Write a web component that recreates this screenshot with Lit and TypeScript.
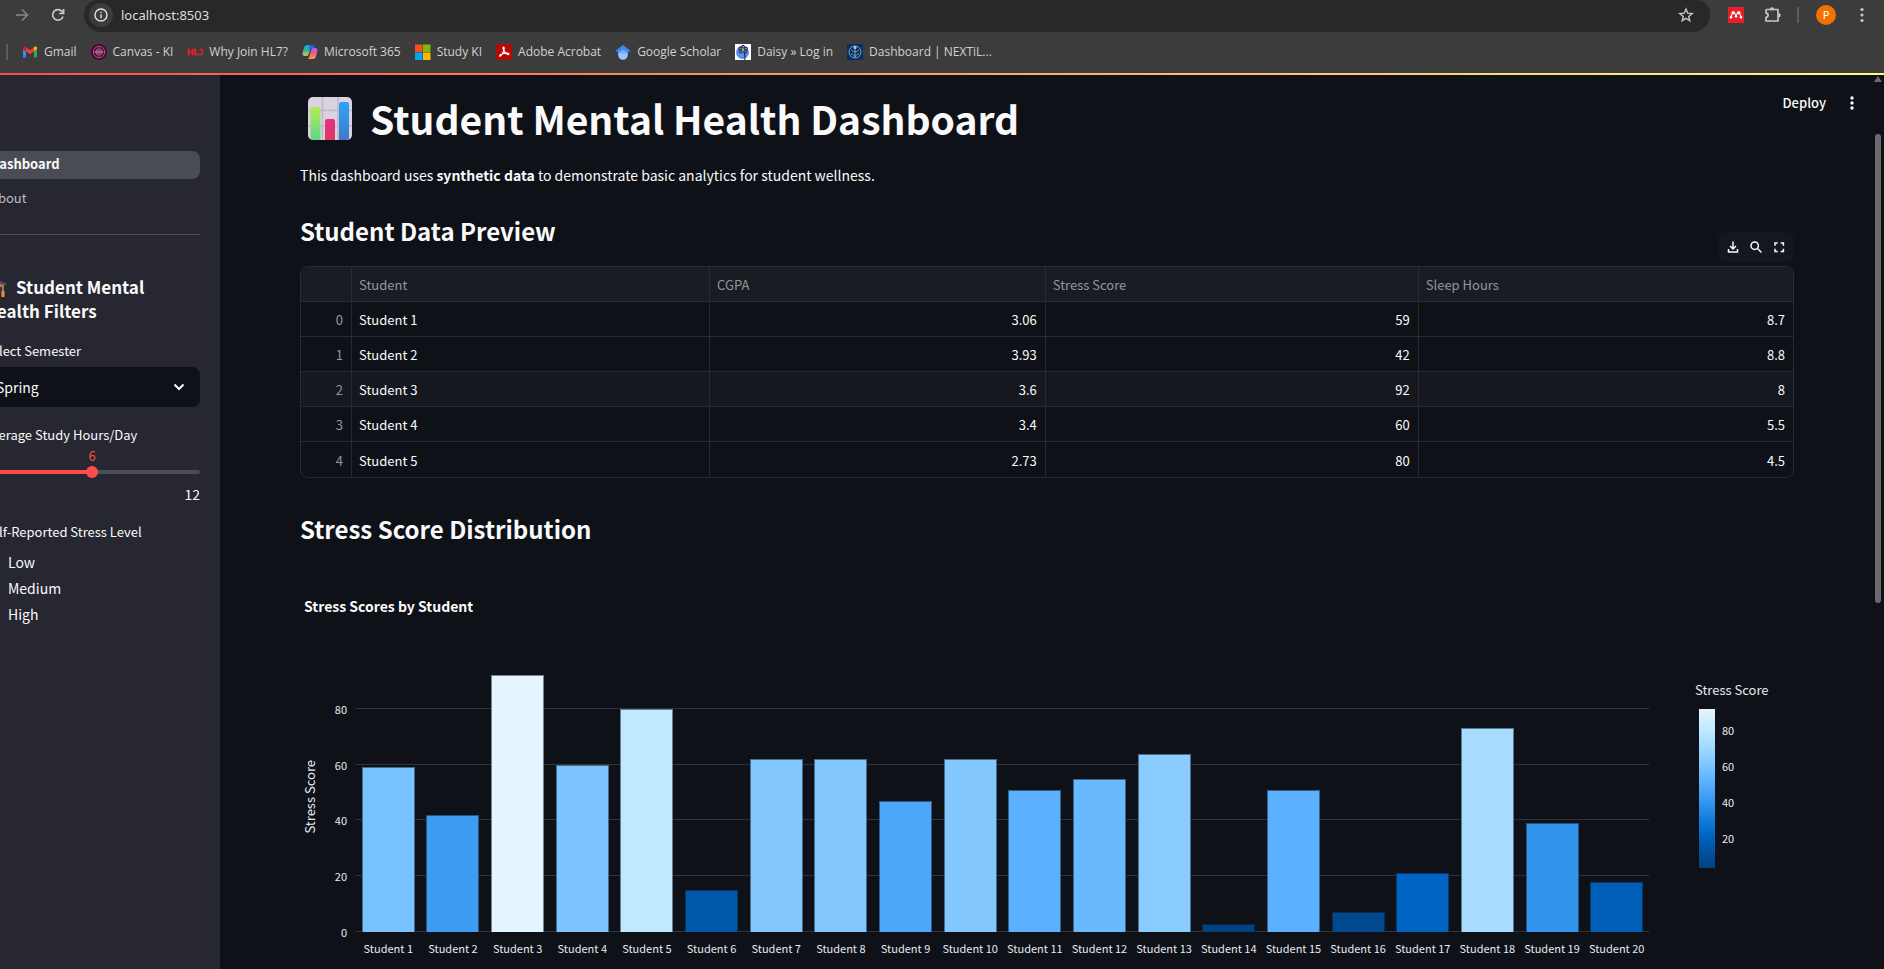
import { LitElement, html, svg, css, unsafeCSS } from "lit";
import { customElement, state } from "lit/decorators.js";
import { styleMap } from "lit/directives/style-map.js";
import { classMap } from "lit/directives/class-map.js";

const sans = css`"Source Sans Pro", "Noto Sans CJK SC", "Noto Sans", sans-serif`;

/* ---------- Browser chrome ---------- */

const bookmarkIcons = {
  gmail: svg`<path fill="#4285f4" d="M1 13.2V5l3 2.3v6.2H2A1 1 0 0 1 1 13.2z"/><path fill="#34a853" d="M12 13.5V7.3L15 5v7.5a1 1 0 0 1-1 1z"/><path fill="#ea4335" d="M4 7.3V3.2l4 3 4-3v4.1l-4 3z"/><path fill="#c5221f" d="M1 5V4c0-1.5 1.6-2 2.6-1.2L4 3.2v4.1z"/><path fill="#fbbc04" d="M12 3.2l.4-.4C13.4 2 15 2.5 15 4v1l-3 2.3z"/>`,
  canvas: svg`<circle cx="8" cy="8" r="8" fill="#4f0433"/><g fill="none" stroke="#b87a9d" stroke-width=".8"><circle cx="8" cy="8" r="5.6"/><path d="M8 3.5v9M5.500 5.500v5M10.500 5.500v5M3.500 8h9M4.500 7v2M11.500 7v2M6.800 4.500v7M9.200 4.500v7"/></g>`,
  hl7: svg`<text x="0" y="11" font-family="Liberation Sans" font-weight="700" font-size="9" fill="#ec1c24" stroke="#ec1c24" stroke-width=".4">HL7</text>`,
  copilot: svg`<defs><linearGradient id="cpA" x1="0" y1="0" x2="0" y2="1"><stop offset="0" stop-color="#1a9fe8"/><stop offset=".5" stop-color="#2fb6a0"/><stop offset="1" stop-color="#e6c52f"/></linearGradient><linearGradient id="cpB" x1="0" y1="0" x2="0" y2="1"><stop offset="0" stop-color="#b060f0"/><stop offset=".5" stop-color="#ee5c8a"/><stop offset="1" stop-color="#ffa04a"/></linearGradient></defs><path fill="url(#cpA)" d="M5 1h5.500c-1 .5-1.500 1.300-1.900 2.600L6.800 10c-.4 1.300-1 2-2.300 2H3c-2 0-3-1.500-2.400-3.500L2.300 3C2.700 1.700 3.600 1 5 1z"/><path fill="#2368d8" d="M7 1h3.500c1 0 1.600.6 1.900 1.600l.6 2H9.500c-1 0-1.500.5-1.800 1.500z"/><path fill="url(#cpB)" d="M11 15H5.500c1-.5 1.500-1.300 1.900-2.600L9.200 6c.4-1.300 1-2 2.300-2H13c2 0 3 1.500 2.400 3.500L13.700 13c-.4 1.300-1.300 2-2.700 2z"/>`,
  microsoft: svg`<path fill="#f25022" d="M0 .5h7.500V8H0z"/><path fill="#7fba00" d="M8 .5h7.500V8H8z"/><path fill="#00a4ef" d="M0 8.500h7.500V16H0z"/><path fill="#ffb900" d="M8 8.500h7.500V16H8z"/>`,
  acrobat: svg`<rect width="16" height="16" rx="2.5" fill="#b30b00"/><path fill="none" stroke="#fff" stroke-width="1.2" d="M7.600 3.200c-.9 0-.6 1.700.3 3.300s2.500 3.900 4.300 4.100c1.300 0 .8-1.300-.9-1.400-2.300-.1-5 .5-6.600 1.400-1.500.9-1.200 2-.2 1.400 1.200-.8 2.700-3.700 3.300-5.600.5-1.700.6-3.200-.2-3.200z"/>`,
  scholar: svg`<path fill="#a0c3ff" d="M8 5.500l4.800 2.800V11a4.800 4.800 0 0 1-9.600 0V8.300z"/><path fill="#4285f4" d="M8 1L.5 6.800l3 1.800C4.300 7 6 6.200 8 6.200s3.700.8 4.500 2.400l3-1.800z"/><path fill="#76a7fa" d="M8 6.200c-2 0-3.700.8-4.500 2.400l.9 1h7.200l.9-1C11.700 7 10 6.200 8 6.200z"/>`,
  daisy: svg`<path fill="#fff" d="M0 0h16v16H0z"/><circle cx="7.5" cy="8.5" r="6.5" fill="#5b8dee"/><g stroke="#1b1f2b" stroke-width="1" fill="none"><circle cx="5.200" cy="4.500" r="1.500"/><circle cx="8" cy="2.800" r="1.500"/><circle cx="11" cy="4.500" r="1.500"/><circle cx="5.800" cy="7.500" r="1.500"/><circle cx="10.500" cy="7.500" r="1.500"/><path d="M9 8c1 3 1.300 5 .8 8"/></g><circle cx="8" cy="5.500" r="1.300" fill="#d9a82c"/>`,
  nextil: svg`<path fill="#06305f" d="M0 0h16v16H0z"/><g fill="none" stroke="#7fa3c4" stroke-width="1"><circle cx="8" cy="8" r="6"/><path d="M8 3v10M4.500 5.500c.5 3 6.500 3 7 0M4 10c2 0 3 1 4 3 1-2 2-3 4-3"/></g><circle cx="8" cy="3.5" r="1.5" fill="#b5cadd"/>`,
};

const bookmarks: [keyof typeof bookmarkIcons, string][] = [
  ["gmail", "Gmail"],
  ["canvas", "Canvas - KI"],
  ["hl7", "Why Join HL7?"],
  ["copilot", "Microsoft 365"],
  ["microsoft", "Study KI"],
  ["acrobat", "Adobe Acrobat"],
  ["scholar", "Google Scholar"],
  ["daisy", "Daisy » Log in"],
  ["nextil", "Dashboard | NEXTiL..."],
];

@customElement("browser-bar")
export class BrowserBar extends LitElement {
  static styles = css`
    :host {
      display: block;
      background: #3c3c3c;
      color: #dadada;
      font-family: "Open Sans", "Noto Sans", sans-serif;
    }
    button {
      display: grid;
      place-items: center;
      padding: 0;
      border: 0;
      background: none;
      color: #c7c7c7;
    }
    .toolbar {
      display: flex;
      align-items: flex-start;
      height: 32px;
    }
    .nav {
      width: 36px;
      height: 30px;
    }
    .nav-group {
      display: flex;
      padding: 0 8px 0 4px;
    }
    .back {
      color: #868686;
    }
    .address {
      flex: 1;
      display: flex;
      align-items: center;
      gap: 8px;
      height: 30px;
      padding: 0 16px 2px 5px;
      border-radius: 14px 14px 17px 17px;
      background: #282828;
    }
    .info {
      width: 24px;
      height: 24px;
      border-radius: 50%;
      background: #3c3c3c;
      color: #e3e3e3;
    }
    .url {
      flex: 1;
      min-width: 0;
      padding: 0;
      border: 0;
      outline: 0;
      background: none;
      color: #dedede;
      font: 13px/20px "Noto Sans", "Open Sans", sans-serif;
    }
    .actions {
      display: flex;
      align-items: center;
      height: 30px;
      padding: 0 12px 0 18px;
    }
    .mendeley {
      margin-right: 20px;
    }
    .divider {
      width: 2px;
      height: 16px;
      background: #5c5c5c;
    }
    .actions .divider {
      margin: 0 17px 0 15px;
    }
    .avatar {
      width: 20px;
      height: 20px;
      margin-right: 16px;
      border-radius: 50%;
      background: #f27100;
      color: #fff;
      font: 11px/20px "Noto Sans", sans-serif;
    }
    .bookmarks {
      display: flex;
      align-items: center;
      gap: 14px;
      height: 40px;
      padding: 0 6px;
    }
    .bookmark {
      display: flex;
      align-items: center;
      gap: 6px;
      color: #d2d2d2;
      font-size: 12px;
      line-height: 20px;
      text-decoration: none;
      white-space: nowrap;
    }
    .glow {
      height: 2px;
      margin-top: 1px;
      background: linear-gradient(90deg, #ff4b4b, #fffd80);
    }
  `;

  render() {
    return html`
      <div class="toolbar">
        <div class="nav-group">
          <button class="nav back" aria-label="Forward">
            <svg width="14" height="14" viewBox="0 0 14 14" fill="none" stroke="currentColor" stroke-width="1.6"><path d="M1 7h11M7 1.500L12.500 7 7 12.500" /></svg>
          </button>
          <button class="nav" aria-label="Reload">
            <svg width="14" height="14" viewBox="0 0 14 14" fill="none" stroke="currentColor" stroke-width="1.7"><path d="M12 8.500A5.300 5.300 0 1 1 11 3.400L12.500 5" /><path d="M12.600 1v4.500H8.200" /></svg>
          </button>
        </div>
        <div class="address">
          <button class="info" aria-label="View site information">
            <svg width="14" height="14" viewBox="0 0 14 14" fill="none" stroke="currentColor" stroke-width="1.4"><circle cx="7" cy="7" r="6" /><path d="M7 6.200v4M7 3.700v1.400" /></svg>
          </button>
          <input class="url" aria-label="Address" value="localhost:8503" />
          <button aria-label="Bookmark this page">
            <svg width="16" height="16" viewBox="0 0 16 16" fill="none" stroke="currentColor" stroke-width="1.4"><path d="M8 2l1.700 4.200 4.500.3-3.500 2.900 1.100 4.400L8 11.400l-3.800 2.400 1.100-4.400-3.500-2.900 4.500-.3z" /></svg>
          </button>
        </div>
        <div class="actions">
          <button class="mendeley" aria-label="Mendeley">
            <svg width="16" height="16" viewBox="0 0 16 16"><path fill="#e81e2c" d="M0 0h16v16H0z" /><g fill="#fff"><circle cx="5.3" cy="5.6" r="1.6" /><circle cx="10.7" cy="5.6" r="1.6" /><circle cx="3" cy="10.2" r="1.3" /><circle cx="8" cy="9.4" r="1.2" /><circle cx="13" cy="10.2" r="1.3" /></g><path fill="none" stroke="#fff" stroke-width="1.1" d="M3 10l1.500-4.500M6.500 6L8 9.200 9.500 6M11.500 5.500L13 10" /></svg>
          </button>
          <button aria-label="Extensions">
            <svg width="18" height="18" viewBox="0 0 18 18" fill="none" stroke="currentColor" stroke-width="1.7" stroke-linejoin="round"><path d="M2 3.500h4.300M9.700 3.500h4.300v11.500H2v-3.600c2.800-.5 2.800-3.800 0-4.300V3.500" /><path fill="currentColor" stroke="none" d="M5.800 3.500a2.200 2.200 0 0 1 4.400 0zM14.500 7a2.200 2.200 0 0 1 0 4.400z" /><path d="M6 3.500h4" /></svg>
          </button>
          <span class="divider"></span>
          <button class="avatar" aria-label="Profile">P</button>
          <button aria-label="Browser menu">
            <svg width="20" height="16" viewBox="0 0 20 16" fill="currentColor"><circle cx="10" cy="2.5" r="1.6" /><circle cx="10" cy="8" r="1.6" /><circle cx="10" cy="13.5" r="1.6" /></svg>
          </button>
        </div>
      </div>
      <nav class="bookmarks" aria-label="Bookmarks">
        <span class="divider"></span>
        ${bookmarks.map(
          ([icon, label]) => html`<a class="bookmark" href="#"
            ><svg width="16" height="16" viewBox="0 0 16 16">${bookmarkIcons[icon]}</svg>${label}</a
          >`
        )}
      </nav>
      <div class="glow"></div>
    `;
  }
}

/* ---------- Sidebar ---------- */

@customElement("filter-sidebar")
export class FilterSidebar extends LitElement {
  @state() hours = 6;

  static styles = css`
    :host {
      display: flex;
      justify-content: flex-end;
      overflow: hidden;
      background: #262730;
      color: #fafafa;
      font-family: ${sans};
    }
    .panel {
      flex: none;
      box-sizing: border-box;
      width: 256px;
      padding: 76px 20px 0;
    }
    .pages {
      display: grid;
      gap: 6px;
      padding-bottom: 21px;
      border-bottom: 1px solid #4c4d55;
    }
    .page {
      padding: 0 6px 2px;
      border-radius: 8px;
      color: #bcbdc1;
      font-size: 13px;
      line-height: 26px;
      text-decoration: none;
    }
    .page.active {
      background: #494b55;
      color: #fafafa;
      font-weight: 700;
    }
    h2 {
      margin: 40px 0 0;
      font-size: 17px;
      line-height: 24px;
      font-weight: 700;
    }
    .cap {
      width: 24px;
      height: 20px;
      margin-right: 8px;
      vertical-align: -4px;
    }
    .label {
      display: block;
      margin: 0;
      padding: 0;
      font-size: 13px;
      line-height: 20px;
    }
    .semester {
      margin-top: 18px;
    }
    .select {
      position: relative;
      margin: 6px 0 18px;
    }
    select {
      display: block;
      appearance: none;
      width: 100%;
      height: 40px;
      padding: 0 12px;
      border: 0;
      border-radius: 8px;
      background: #0e1117;
      color: #fafafa;
      font: 14px/24px ${sans};
    }
    .chevron {
      position: absolute;
      right: 14px;
      top: 13px;
      pointer-events: none;
    }
    .value {
      display: block;
      color: #ff4b4b;
      font-size: 13px;
      line-height: 21px;
      text-align: center;
    }
    .slider {
      display: block;
      appearance: none;
      width: 100%;
      height: 12px;
      margin: 0 0 6px;
      background: none;
    }
    .slider::-webkit-slider-runnable-track {
      height: 4px;
      border-radius: 2px;
      background: linear-gradient(90deg, #ff4b4b 50%, #4b4c55 50%);
    }
    .slider::-webkit-slider-thumb {
      appearance: none;
      width: 12px;
      height: 12px;
      margin-top: -4px;
      border-radius: 50%;
      background: #ff4b4b;
    }
    .limits {
      display: flex;
      justify-content: space-between;
      font-size: 14px;
      line-height: 20px;
    }
    fieldset {
      margin: 18px 0 0;
      padding: 0;
      border: 0;
    }
    .options {
      display: grid;
      gap: 2px;
      padding-top: 8px;
    }
    .option {
      display: flex;
      align-items: center;
      gap: 8px;
      font-size: 14px;
      line-height: 24px;
    }
    .option input {
      width: 16px;
      height: 16px;
      margin: 0;
      accent-color: #ff4b4b;
    }
  `;

  render() {
    return html`
      <div class="panel">
        <nav class="pages">
          <a class="page active" href="#">Dashboard</a>
          <a class="page" href="#about">About</a>
        </nav>
        <h2>
          <svg class="cap" viewBox="0 0 24 20" aria-hidden="true"><path fill="#3b3146" d="M5 9l7 4 7-4v6c-2 4-12 4-14 0z" /><path fill="#5b4a6b" d="M0 7l12-6 11 5-11 7z" /><path fill="none" stroke="#d98a3a" stroke-width="1.500" d="M12 6l7 2v6" /><path fill="#f0923c" d="M17.500 13h3v6h-3z" /></svg>Student Mental Health Filters
        </h2>
        <label class="label semester" for="semester">Select Semester</label>
        <div class="select">
          <select id="semester">
            <option selected>Spring</option>
            <option>Summer</option>
            <option>Fall</option>
          </select>
          <svg class="chevron" width="14" height="14" viewBox="0 0 14 14" fill="none" stroke="#fafafa" stroke-width="2"><path d="M2.500 4.500L7 9l4.500-4.500" /></svg>
        </div>
        <label class="label" for="hours">Average Study Hours/Day</label>
        <output class="value" for="hours">${this.hours}</output>
        <input class="slider" id="hours" type="range" min="0" max="12" .value=${String(this.hours)}
          @input=${(e: Event) => (this.hours = Number((e.target as HTMLInputElement).value))} />
        <div class="limits"><span>0</span><span>12</span></div>
        <fieldset>
          <legend class="label">Self-Reported Stress Level</legend>
          <div class="options">
            ${["Low", "Medium", "High"].map(
              (level, i) => html`<label class="option"><input type="radio" name="stress" ?checked=${i === 0} />${level}</label>`
            )}
          </div>
        </fieldset>
      </div>
    `;
  }
}

/* ---------- Data table ---------- */

@customElement("data-preview")
export class DataPreview extends LitElement {
  rows = [
    ["Student 1", 3.06, 59, 8.7],
    ["Student 2", 3.93, 42, 8.8],
    ["Student 3", 3.6, 92, 8],
    ["Student 4", 3.4, 60, 5.5],
    ["Student 5", 2.73, 80, 4.5],
  ];

  static styles = css`
    :host {
      display: block;
      position: relative;
    }
    .tools {
      position: absolute;
      right: 0;
      bottom: calc(100% + 4px);
      display: flex;
      gap: 9px;
      padding: 8px;
      border-radius: 8px;
      background: #131720;
    }
    .tools button {
      width: 14px;
      height: 14px;
      padding: 0;
      border: 0;
      background: none;
      color: #fafafa;
    }
    .tools svg {
      display: block;
    }
    .frame {
      overflow: hidden;
      border: 1px solid #292b30;
      border-radius: 8px;
    }
    table {
      width: 100%;
      table-layout: fixed;
      border-collapse: separate;
      border-spacing: 0;
      color: #fafafa;
      font: 13px/32px ${sans};
    }
    th,
    td {
      box-sizing: border-box;
      height: 35px;
      padding: 2px 8px 0;
      border-right: 1px solid #292b30;
      border-bottom: 1px solid #292b30;
      text-align: right;
    }
    th:last-child,
    td:last-child {
      border-right: 0;
    }
    tbody tr:last-child > * {
      border-bottom: 0;
    }
    th {
      color: #95969b;
      font-weight: 400;
    }
    thead th,
    td.name {
      padding-left: 7px;
      text-align: left;
    }
    thead th {
      background: #1a1c23;
    }
    .hovered {
      background: #15181f;
    }
    .c-index {
      width: 51px;
    }
    .c-name {
      width: 24%;
    }
    .c-gpa {
      width: 22.5%;
    }
    .c-stress {
      width: 25%;
    }
  `;

  render() {
    return html`
      <div class="tools">
        <button aria-label="Download">
          <svg width="14" height="14" viewBox="0 0 14 14" fill="none" stroke="currentColor" stroke-width="1.5"><path d="M7 1.500v7M4 6l3 3 3-3M2.500 9v3h9V9" /></svg>
        </button>
        <button aria-label="Search">
          <svg width="14" height="14" viewBox="0 0 14 14" fill="none" stroke="currentColor" stroke-width="1.5"><circle cx="5.7" cy="5.7" r="3.7" /><path d="M8.500 8.500l4 4" /></svg>
        </button>
        <button aria-label="Fullscreen">
          <svg width="14" height="14" viewBox="0 0 14 14" fill="none" stroke="currentColor" stroke-width="1.5"><path d="M3 5.700V3h2.700M8.700 3h2.700v2.700M11.400 8.700v2.700H8.700M5.700 11.400H3V8.700" /></svg>
        </button>
      </div>
      <div class="frame">
        <table>
          <colgroup>
            <col class="c-index" /><col class="c-name" /><col class="c-gpa" /><col class="c-stress" /><col />
          </colgroup>
          <thead>
            <tr><th></th><th>Student</th><th>CGPA</th><th>Stress Score</th><th>Sleep Hours</th></tr>
          </thead>
          <tbody>
            ${this.rows.map(
              (row, i) => html`<tr class=${classMap({ hovered: i === 2 })}>
                <th>${i}</th>
                ${row.map((cell, j) => html`<td class=${classMap({ name: j === 0 })}>${cell}</td>`)}
              </tr>`
            )}
          </tbody>
        </table>
      </div>
    `;
  }
}

/* ---------- Bar chart ---------- */

const scale = ["#004280", "#0054a3", "#0068c9", "#1c83e1", "#3d9df3", "#60b4ff", "#83c9ff", "#a6dcff", "#c7ebff", "#e4f5ff"];

@customElement("stress-chart")
export class StressChart extends LitElement {
  scores = [59, 42, 92, 60, 80, 15, 62, 62, 47, 62, 51, 55, 64, 3, 51, 7, 21, 73, 39, 18];
  ticks = [80, 60, 40, 20, 0];

  private color(score: number) {
    const low = Math.min(...this.scores);
    const high = Math.max(...this.scores);
    const t = ((score - low) / (high - low)) * (scale.length - 1);
    const i = Math.min(Math.floor(t), scale.length - 2);
    const channel = (hex: string, n: number) => parseInt(hex.slice(1 + n * 2, 3 + n * 2), 16);
    const mix = [0, 1, 2].map((n) => {
      const a = channel(scale[i], n);
      return Math.round(a + (channel(scale[i + 1], n) - a) * (t - i));
    });
    return `rgb(${mix.join(",")})`;
  }

  static styles = css`
    :host {
      display: block;
      color: #e6eaf1;
      font: 11px/20px ${sans};
    }
    h3 {
      margin: 0 4px 46px;
      color: #fafafa;
      font-size: 14px;
      line-height: 20px;
      font-weight: 700;
    }
    .chart {
      display: grid;
      grid-template-columns: 20px 27px minmax(0, 1fr) 99px;
      grid-template-rows: 270px auto;
    }
    .y-title {
      justify-self: center;
      align-self: center;
      writing-mode: vertical-rl;
      transform: rotate(180deg);
      font-size: 13px;
    }
    .bands {
      display: flex;
      flex-direction: column;
    }
    .band {
      flex: 200 0 0;
      display: flex;
      align-items: flex-end;
      justify-content: flex-end;
      min-height: 0;
      box-sizing: border-box;
    }
    .band.first {
      flex-grow: 168;
    }
    .band span {
      margin-bottom: -10px;
    }
    .plot {
      display: grid;
      margin: 0 46px 0 9px;
    }
    .grid,
    .bars {
      grid-area: 1 / 1;
      min-height: 0;
    }
    .grid .band {
      border-bottom: 1px solid #31343b;
    }
    .bars,
    .names {
      display: grid;
      grid-template-columns: repeat(20, minmax(0, 1fr));
    }
    .bars {
      align-items: end;
    }
    .bar {
      box-sizing: border-box;
      margin: 0 9%;
      border: solid rgba(14, 17, 23, 0.5);
      border-width: 1px 1px 0;
    }
    .names {
      grid-column: 3;
      margin: 6px 46px 0 9px;
      text-align: center;
      white-space: nowrap;
    }
    .legend {
      padding-top: 18px;
      font-size: 13px;
      white-space: nowrap;
    }
    .scale {
      display: flex;
      gap: 7px;
      height: 159px;
      margin: 9px 4px 0;
      font-size: 11px;
    }
    .ramp {
      width: 16px;
      background: linear-gradient(0deg, ${unsafeCSS(scale.join(","))});
    }
    .scale .first {
      flex-grow: 120;
    }
    .scale .last {
      flex-grow: 170;
    }
  `;

  render() {
    return html`
      <h3>Stress Scores by Student</h3>
      <div class="chart">
        <div class="y-title">Stress Score</div>
        <div class="bands">
          ${this.ticks.map((t, i) => html`<div class=${classMap({ band: true, first: i === 0 })}><span>${t}</span></div>`)}
        </div>
        <div class="plot">
          <div class="bands grid">
            ${this.ticks.map((_, i) => html`<div class=${classMap({ band: true, first: i === 0 })}></div>`)}
          </div>
          <div class="bars">
            ${this.scores.map(
              (s) => html`<div class="bar" style=${styleMap({ height: `${(s / 96.8) * 100}%`, background: this.color(s) })}></div>`
            )}
          </div>
        </div>
        <div class="legend">
          Stress Score
          <div class="scale">
            <div class="ramp"></div>
            <div class="bands">
              ${[80, 60, 40, 20].map((t, i) => html`<div class=${classMap({ band: true, first: i === 0 })}><span>${t}</span></div>`)}
              <div class="band last"></div>
            </div>
          </div>
        </div>
        <div class="names">${this.scores.map((_, i) => html`<span>Student ${i + 1}</span>`)}</div>
      </div>
    `;
  }
}

/* ---------- Page ---------- */

@customElement("app-root")
export class AppRoot extends LitElement {
  static styles = css`
    :host {
      display: grid;
      grid-template-rows: auto minmax(0, 1fr);
      height: 100vh;
      overflow: hidden;
      background: #0e1117;
      color: #fafafa;
      font-family: ${sans};
    }
    .body {
      display: grid;
      grid-template-columns: 220px minmax(0, 1fr) 10px;
      min-height: 0;
    }
    main {
      position: relative;
      min-height: 0;
      overflow: hidden;
      padding: 17px 80px 0;
    }
    .header {
      position: absolute;
      top: 16px;
      right: 14px;
      display: flex;
      align-items: center;
      gap: 18px;
    }
    .header button {
      padding: 0;
      border: 0;
      background: none;
      color: #fafafa;
      font: 13px/24px ${sans};
      font-weight: 500;
    }
    .header svg {
      display: block;
    }
    h1 {
      display: flex;
      align-items: center;
      gap: 17px;
      margin: 0 0 19px;
      padding-left: 8px;
      font-size: 39px;
      line-height: 52px;
      font-weight: 700;
    }
    p {
      margin: 0 0 25px;
      font-size: 14px;
      line-height: 24px;
    }
    h2 {
      margin: 0;
      font-size: 24px;
      line-height: 38px;
      font-weight: 700;
    }
    data-preview {
      margin: 16px 0 32px;
    }
    stress-chart {
      margin-top: 48px;
    }
    .scrollbar {
      display: flex;
      flex-direction: column;
      align-items: center;
      gap: 52px;
      padding: 1px 2px 0 0;
    }
    .thumb {
      width: 6px;
      height: 52.5%;
      border-radius: 3px;
      background: #6b6b6f;
    }
  `;

  render() {
    return html`
      <browser-bar></browser-bar>
      <div class="body">
        <filter-sidebar></filter-sidebar>
        <main>
          <h1>
            <svg width="45" height="44" viewBox="0 0 45 44" aria-hidden="true">
              <defs>
                <linearGradient id="green" x1="0" y1="0" x2="0" y2="1"><stop offset="0" stop-color="#b4ec51" /><stop offset="1" stop-color="#5fd68c" /></linearGradient>
                <linearGradient id="pink" x1="0" y1="0" x2="0" y2="1"><stop offset="0" stop-color="#ea2f86" /><stop offset="1" stop-color="#dd3a5e" /></linearGradient>
                <linearGradient id="blue" x1="0" y1="0" x2="0" y2="1"><stop offset="0" stop-color="#2ba5f5" /><stop offset="1" stop-color="#3f79cc" /></linearGradient>
              </defs>
              <rect y="1" width="44" height="43" rx="5" fill="#dbd3e2" />
              <path stroke="#bdb6c6" stroke-width="1.500" d="M14.500 1v43M30 1v43M0 14.500h44M0 30h44" />
              <path fill="url(#green)" d="M2.500 13a2 2 0 0 1 2-2h6a2 2 0 0 1 2 2v31h-7.500q-2 0-2.500-2z" />
              <path fill="url(#pink)" d="M17 25a2 2 0 0 1 2-2h6a2 2 0 0 1 2 2v19H17z" />
              <path fill="url(#blue)" d="M31 8a2 2 0 0 1 2-2h6a2 2 0 0 1 2 2v34.500q-1 1.500-3 1.500h-7z" />
            </svg>
            Student Mental Health Dashboard
          </h1>
          <p>This dashboard uses <strong>synthetic data</strong> to demonstrate basic analytics for student wellness.</p>
          <h2>Student Data Preview</h2>
          <data-preview></data-preview>
          <h2>Stress Score Distribution</h2>
          <stress-chart></stress-chart>
          <div class="header">
            <button>Deploy</button>
            <button aria-label="Main menu">
              <svg width="16" height="16" viewBox="0 0 16 16" fill="currentColor"><circle cx="8" cy="3" r="1.7" /><circle cx="8" cy="8" r="1.7" /><circle cx="8" cy="13" r="1.7" /></svg>
            </button>
          </div>
        </main>
        <div class="scrollbar">
          <svg width="8" height="6" viewBox="0 0 8 6"><path fill="#6b6b6f" d="M4 0l4 6H0z" /></svg>
          <div class="thumb"></div>
        </div>
      </div>
    `;
  }
}
